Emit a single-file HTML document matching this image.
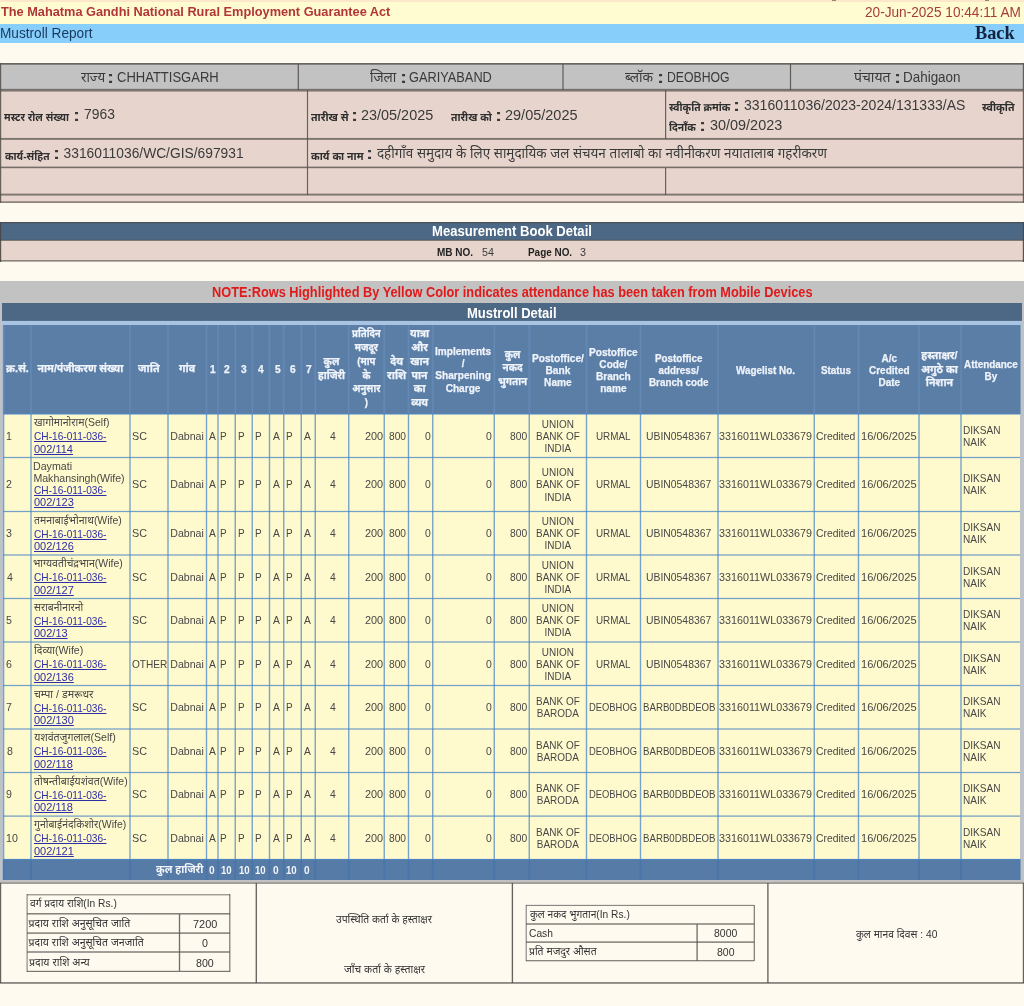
<!DOCTYPE html>
<html lang="hi"><head><meta charset="utf-8"><title>Mustroll Report</title>
<style>
html,body{margin:0;padding:0}
body{width:1024px;height:1006px;background:#fffaf0;position:relative;overflow:hidden;font-family:"Liberation Sans","Noto Sans Devanagari","FreeSans",sans-serif;color:#3a3a3a;font-size:11px;}
.r{position:absolute}
#tx{position:absolute;left:0;top:0;width:1024px;height:1006px;will-change:transform;filter:blur(0.3px)}
.t{position:absolute;white-space:nowrap;transform-origin:0 0;line-height:14px}
.c{text-align:center}.rt{text-align:right}
.b{font-weight:bold}
.hd{-webkit-text-stroke:0.25px #eff3fa;color:#eff3fa;font-size:10.5px;line-height:12.2px;font-weight:bold;text-align:center}
.hh{line-height:13.8px}
.bd{font-size:10.6px;line-height:12.1px;color:#474747}
a{color:#2e2ea6;text-decoration:underline}
.lb{font-size:10.8px;font-weight:bold;color:#2e2e2e}.co{font-size:17px;font-weight:bold;line-height:10px}
.s14{font-size:13.8px;line-height:18px}
.s105{font-size:10.5px}
</style></head>
<body>
<div class="r" style="left:0px;top:0px;width:1024px;height:2px;background:#fce8c8"></div>
<div class="r" style="left:832px;top:0px;width:4px;height:1.4px;background:rgba(70,55,40,0.55)"></div>
<div class="r" style="left:985px;top:0px;width:4px;height:1.4px;background:rgba(70,55,40,0.55)"></div>
<div class="r" style="left:0px;top:2px;width:1024px;height:21.6px;background:#fffcd2"></div>
<div class="r" style="left:0px;top:23.6px;width:1024px;height:19.1px;background:#87cefa"></div>
<div class="r" style="left:0px;top:63px;width:1024px;height:27px;background:#c2c2c2"></div>
<div class="r" style="left:0px;top:90px;width:1024px;height:112.5px;background:#e7d5cd"></div>
<div class="r" style="left:0px;top:63px;width:1024px;height:1px;background:rgba(90,84,80,0.85)"></div>
<div class="r" style="left:0px;top:64px;width:1024px;height:1px;background:rgba(90,84,80,0.59)"></div>
<div class="r" style="left:0px;top:88px;width:1024px;height:1px;background:rgba(90,84,80,0.11)"></div>
<div class="r" style="left:0px;top:89px;width:1024px;height:1px;background:rgba(90,84,80,0.75)"></div>
<div class="r" style="left:0px;top:90px;width:1024px;height:1px;background:rgba(90,84,80,0.75)"></div>
<div class="r" style="left:0px;top:91px;width:1024px;height:1px;background:rgba(90,84,80,0.41)"></div>
<div class="r" style="left:0px;top:137px;width:1024px;height:1px;background:rgba(90,84,80,0.04)"></div>
<div class="r" style="left:0px;top:138px;width:1024px;height:1px;background:rgba(90,84,80,0.75)"></div>
<div class="r" style="left:0px;top:139px;width:1024px;height:1px;background:rgba(90,84,80,0.64)"></div>
<div class="r" style="left:0px;top:166px;width:1024px;height:1px;background:rgba(90,84,80,0.32)"></div>
<div class="r" style="left:0px;top:167px;width:1024px;height:1px;background:rgba(90,84,80,0.80)"></div>
<div class="r" style="left:0px;top:168px;width:1024px;height:1px;background:rgba(90,84,80,0.16)"></div>
<div class="r" style="left:0px;top:193px;width:1024px;height:1px;background:rgba(90,84,80,0.26)"></div>
<div class="r" style="left:0px;top:194px;width:1024px;height:1px;background:rgba(90,84,80,0.75)"></div>
<div class="r" style="left:0px;top:195px;width:1024px;height:1px;background:rgba(90,84,80,0.41)"></div>
<div class="r" style="left:0px;top:201px;width:1024px;height:1px;background:rgba(90,84,80,0.47)"></div>
<div class="r" style="left:0px;top:202px;width:1024px;height:1px;background:rgba(90,84,80,0.64)"></div>
<div class="r" style="left:0px;top:63px;width:1px;height:140px;background:rgba(90,84,80,0.90)"></div>
<div class="r" style="left:1px;top:63px;width:1px;height:140px;background:rgba(90,84,80,0.18)"></div>
<div class="r" style="left:1022px;top:63px;width:1px;height:140px;background:rgba(90,84,80,0.18)"></div>
<div class="r" style="left:1023px;top:63px;width:1px;height:140px;background:rgba(90,84,80,0.90)"></div>
<div class="r" style="left:297px;top:64px;width:1px;height:26px;background:rgba(90,84,80,0.29)"></div>
<div class="r" style="left:298px;top:64px;width:1px;height:26px;background:rgba(90,84,80,0.86)"></div>
<div class="r" style="left:562px;top:64px;width:1px;height:26px;background:rgba(90,84,80,0.57)"></div>
<div class="r" style="left:563px;top:64px;width:1px;height:26px;background:rgba(90,84,80,0.57)"></div>
<div class="r" style="left:789px;top:64px;width:1px;height:26px;background:rgba(90,84,80,0.10)"></div>
<div class="r" style="left:790px;top:64px;width:1px;height:26px;background:rgba(90,84,80,0.95)"></div>
<div class="r" style="left:791px;top:64px;width:1px;height:26px;background:rgba(90,84,80,0.10)"></div>
<div class="r" style="left:306px;top:90px;width:1px;height:105px;background:rgba(90,84,80,0.09)"></div>
<div class="r" style="left:307px;top:90px;width:1px;height:105px;background:rgba(90,84,80,0.90)"></div>
<div class="r" style="left:308px;top:90px;width:1px;height:105px;background:rgba(90,84,80,0.09)"></div>
<div class="r" style="left:665px;top:90px;width:1px;height:49px;background:rgba(90,84,80,0.90)"></div>
<div class="r" style="left:666px;top:90px;width:1px;height:49px;background:rgba(90,84,80,0.18)"></div>
<div class="r" style="left:665px;top:168px;width:1px;height:27px;background:rgba(90,84,80,0.90)"></div>
<div class="r" style="left:666px;top:168px;width:1px;height:27px;background:rgba(90,84,80,0.18)"></div>
<div class="r" style="left:0px;top:222px;width:1024px;height:18px;background:#4d6885"></div>
<div class="r" style="left:0px;top:240px;width:1024px;height:21px;background:#e7d5cd"></div>
<div class="r" style="left:0px;top:222px;width:1024px;height:1px;background:rgba(74,70,68,0.72)"></div>
<div class="r" style="left:0px;top:223px;width:1024px;height:1px;background:rgba(74,70,68,0.18)"></div>
<div class="r" style="left:0px;top:239px;width:1024px;height:1px;background:rgba(74,70,68,0.16)"></div>
<div class="r" style="left:0px;top:240px;width:1024px;height:1px;background:rgba(74,70,68,0.64)"></div>
<div class="r" style="left:0px;top:260px;width:1024px;height:1px;background:rgba(90,84,80,0.63)"></div>
<div class="r" style="left:0px;top:261px;width:1024px;height:1px;background:rgba(90,84,80,0.45)"></div>
<div class="r" style="left:0px;top:222px;width:1px;height:40px;background:rgba(74,70,68,0.90)"></div>
<div class="r" style="left:1px;top:222px;width:1px;height:40px;background:rgba(74,70,68,0.18)"></div>
<div class="r" style="left:1022px;top:222px;width:1px;height:40px;background:rgba(74,70,68,0.18)"></div>
<div class="r" style="left:1023px;top:222px;width:1px;height:40px;background:rgba(74,70,68,0.90)"></div>
<div class="r" style="left:0px;top:281.2px;width:1024px;height:601.8px;background:#c2c2c2"></div>
<div class="r" style="left:2.3px;top:303.4px;width:1019.5px;height:18.1px;background:#4d6885"></div>
<div class="r" style="left:2px;top:320px;width:1020px;height:1px;background:rgba(168,196,226,0.10)"></div>
<div class="r" style="left:2px;top:321px;width:1020px;height:1px;background:rgba(168,196,226,1.00)"></div>
<div class="r" style="left:2px;top:322px;width:1020px;height:1px;background:rgba(168,196,226,1.00)"></div>
<div class="r" style="left:2px;top:323px;width:1020px;height:1px;background:rgba(168,196,226,1.00)"></div>
<div class="r" style="left:2px;top:324px;width:1020px;height:1px;background:rgba(168,196,226,1.00)"></div>
<div class="r" style="left:2px;top:325px;width:1020px;height:1px;background:rgba(168,196,226,0.10)"></div>
<div class="r" style="left:2.3px;top:324.8px;width:1018.3px;height:89.2px;background:#5b7ea7"></div>
<div class="r" style="left:2.3px;top:414px;width:1018.1px;height:445.6px;background:#fffacd"></div>
<div class="r" style="left:2.3px;top:859.4px;width:1018.3px;height:20.5px;background:#567ba6"></div>
<div class="r" style="left:1020px;top:325px;width:1px;height:555px;background:rgba(176,196,220,0.45)"></div>
<div class="r" style="left:1021px;top:325px;width:1px;height:555px;background:rgba(176,196,220,1.00)"></div>
<div class="r" style="left:1022px;top:325px;width:1px;height:555px;background:rgba(176,196,220,0.05)"></div>
<div class="r" style="left:1px;top:325px;width:1px;height:555px;background:rgba(176,196,220,0.09)"></div>
<div class="r" style="left:2px;top:325px;width:1px;height:555px;background:rgba(176,196,220,0.90)"></div>
<div class="r" style="left:3px;top:325px;width:1px;height:555px;background:rgba(176,196,220,0.09)"></div>
<div class="r" style="left:2px;top:325px;width:1px;height:89px;background:rgba(122,166,220,0.07)"></div>
<div class="r" style="left:3px;top:325px;width:1px;height:89px;background:rgba(122,166,220,0.25)"></div>
<div class="r" style="left:4px;top:325px;width:1px;height:89px;background:rgba(122,166,220,0.12)"></div>
<div class="r" style="left:30px;top:325px;width:1px;height:89px;background:rgba(122,166,220,0.22)"></div>
<div class="r" style="left:31px;top:325px;width:1px;height:89px;background:rgba(122,166,220,0.22)"></div>
<div class="r" style="left:129px;top:325px;width:1px;height:89px;background:rgba(122,166,220,0.23)"></div>
<div class="r" style="left:130px;top:325px;width:1px;height:89px;background:rgba(122,166,220,0.23)"></div>
<div class="r" style="left:167px;top:325px;width:1px;height:89px;background:rgba(122,166,220,0.23)"></div>
<div class="r" style="left:168px;top:325px;width:1px;height:89px;background:rgba(122,166,220,0.23)"></div>
<div class="r" style="left:205px;top:325px;width:1px;height:89px;background:rgba(122,166,220,0.10)"></div>
<div class="r" style="left:206px;top:325px;width:1px;height:89px;background:rgba(122,166,220,0.25)"></div>
<div class="r" style="left:207px;top:325px;width:1px;height:89px;background:rgba(122,166,220,0.10)"></div>
<div class="r" style="left:217px;top:325px;width:1px;height:89px;background:rgba(122,166,220,0.23)"></div>
<div class="r" style="left:218px;top:325px;width:1px;height:89px;background:rgba(122,166,220,0.23)"></div>
<div class="r" style="left:234px;top:325px;width:1px;height:89px;background:rgba(122,166,220,0.16)"></div>
<div class="r" style="left:235px;top:325px;width:1px;height:89px;background:rgba(122,166,220,0.25)"></div>
<div class="r" style="left:236px;top:325px;width:1px;height:89px;background:rgba(122,166,220,0.04)"></div>
<div class="r" style="left:251px;top:325px;width:1px;height:89px;background:rgba(122,166,220,0.16)"></div>
<div class="r" style="left:252px;top:325px;width:1px;height:89px;background:rgba(122,166,220,0.25)"></div>
<div class="r" style="left:253px;top:325px;width:1px;height:89px;background:rgba(122,166,220,0.04)"></div>
<div class="r" style="left:268px;top:325px;width:1px;height:89px;background:rgba(122,166,220,0.10)"></div>
<div class="r" style="left:269px;top:325px;width:1px;height:89px;background:rgba(122,166,220,0.25)"></div>
<div class="r" style="left:270px;top:325px;width:1px;height:89px;background:rgba(122,166,220,0.10)"></div>
<div class="r" style="left:282px;top:325px;width:1px;height:89px;background:rgba(122,166,220,0.04)"></div>
<div class="r" style="left:283px;top:325px;width:1px;height:89px;background:rgba(122,166,220,0.25)"></div>
<div class="r" style="left:284px;top:325px;width:1px;height:89px;background:rgba(122,166,220,0.16)"></div>
<div class="r" style="left:300px;top:325px;width:1px;height:89px;background:rgba(122,166,220,0.16)"></div>
<div class="r" style="left:301px;top:325px;width:1px;height:89px;background:rgba(122,166,220,0.25)"></div>
<div class="r" style="left:302px;top:325px;width:1px;height:89px;background:rgba(122,166,220,0.04)"></div>
<div class="r" style="left:314px;top:325px;width:1px;height:89px;background:rgba(122,166,220,0.16)"></div>
<div class="r" style="left:315px;top:325px;width:1px;height:89px;background:rgba(122,166,220,0.25)"></div>
<div class="r" style="left:316px;top:325px;width:1px;height:89px;background:rgba(122,166,220,0.04)"></div>
<div class="r" style="left:347px;top:325px;width:1px;height:89px;background:rgba(122,166,220,0.04)"></div>
<div class="r" style="left:348px;top:325px;width:1px;height:89px;background:rgba(122,166,220,0.25)"></div>
<div class="r" style="left:349px;top:325px;width:1px;height:89px;background:rgba(122,166,220,0.16)"></div>
<div class="r" style="left:383px;top:325px;width:1px;height:89px;background:rgba(122,166,220,0.16)"></div>
<div class="r" style="left:384px;top:325px;width:1px;height:89px;background:rgba(122,166,220,0.25)"></div>
<div class="r" style="left:385px;top:325px;width:1px;height:89px;background:rgba(122,166,220,0.04)"></div>
<div class="r" style="left:407px;top:325px;width:1px;height:89px;background:rgba(122,166,220,0.10)"></div>
<div class="r" style="left:408px;top:325px;width:1px;height:89px;background:rgba(122,166,220,0.25)"></div>
<div class="r" style="left:409px;top:325px;width:1px;height:89px;background:rgba(122,166,220,0.10)"></div>
<div class="r" style="left:431px;top:325px;width:1px;height:89px;background:rgba(122,166,220,0.04)"></div>
<div class="r" style="left:432px;top:325px;width:1px;height:89px;background:rgba(122,166,220,0.25)"></div>
<div class="r" style="left:433px;top:325px;width:1px;height:89px;background:rgba(122,166,220,0.16)"></div>
<div class="r" style="left:493px;top:325px;width:1px;height:89px;background:rgba(122,166,220,0.16)"></div>
<div class="r" style="left:494px;top:325px;width:1px;height:89px;background:rgba(122,166,220,0.25)"></div>
<div class="r" style="left:495px;top:325px;width:1px;height:89px;background:rgba(122,166,220,0.04)"></div>
<div class="r" style="left:528px;top:325px;width:1px;height:89px;background:rgba(122,166,220,0.16)"></div>
<div class="r" style="left:529px;top:325px;width:1px;height:89px;background:rgba(122,166,220,0.25)"></div>
<div class="r" style="left:530px;top:325px;width:1px;height:89px;background:rgba(122,166,220,0.04)"></div>
<div class="r" style="left:585px;top:325px;width:1px;height:89px;background:rgba(122,166,220,0.10)"></div>
<div class="r" style="left:586px;top:325px;width:1px;height:89px;background:rgba(122,166,220,0.25)"></div>
<div class="r" style="left:587px;top:325px;width:1px;height:89px;background:rgba(122,166,220,0.10)"></div>
<div class="r" style="left:639px;top:325px;width:1px;height:89px;background:rgba(122,166,220,0.10)"></div>
<div class="r" style="left:640px;top:325px;width:1px;height:89px;background:rgba(122,166,220,0.25)"></div>
<div class="r" style="left:641px;top:325px;width:1px;height:89px;background:rgba(122,166,220,0.10)"></div>
<div class="r" style="left:717px;top:325px;width:1px;height:89px;background:rgba(122,166,220,0.22)"></div>
<div class="r" style="left:718px;top:325px;width:1px;height:89px;background:rgba(122,166,220,0.22)"></div>
<div class="r" style="left:813px;top:325px;width:1px;height:89px;background:rgba(122,166,220,0.16)"></div>
<div class="r" style="left:814px;top:325px;width:1px;height:89px;background:rgba(122,166,220,0.25)"></div>
<div class="r" style="left:815px;top:325px;width:1px;height:89px;background:rgba(122,166,220,0.04)"></div>
<div class="r" style="left:857px;top:325px;width:1px;height:89px;background:rgba(122,166,220,0.10)"></div>
<div class="r" style="left:858px;top:325px;width:1px;height:89px;background:rgba(122,166,220,0.25)"></div>
<div class="r" style="left:859px;top:325px;width:1px;height:89px;background:rgba(122,166,220,0.10)"></div>
<div class="r" style="left:918px;top:325px;width:1px;height:89px;background:rgba(122,166,220,0.22)"></div>
<div class="r" style="left:919px;top:325px;width:1px;height:89px;background:rgba(122,166,220,0.22)"></div>
<div class="r" style="left:960px;top:325px;width:1px;height:89px;background:rgba(122,166,220,0.22)"></div>
<div class="r" style="left:961px;top:325px;width:1px;height:89px;background:rgba(122,166,220,0.22)"></div>
<div class="r" style="left:2px;top:414px;width:1px;height:446px;background:rgba(74,134,198,0.07)"></div>
<div class="r" style="left:3px;top:414px;width:1px;height:446px;background:rgba(74,134,198,0.75)"></div>
<div class="r" style="left:4px;top:414px;width:1px;height:446px;background:rgba(74,134,198,0.22)"></div>
<div class="r" style="left:30px;top:414px;width:1px;height:446px;background:rgba(74,134,198,0.52)"></div>
<div class="r" style="left:31px;top:414px;width:1px;height:446px;background:rgba(74,134,198,0.52)"></div>
<div class="r" style="left:129px;top:414px;width:1px;height:446px;background:rgba(74,134,198,0.52)"></div>
<div class="r" style="left:130px;top:414px;width:1px;height:446px;background:rgba(74,134,198,0.52)"></div>
<div class="r" style="left:167px;top:414px;width:1px;height:446px;background:rgba(74,134,198,0.52)"></div>
<div class="r" style="left:168px;top:414px;width:1px;height:446px;background:rgba(74,134,198,0.52)"></div>
<div class="r" style="left:205px;top:414px;width:1px;height:446px;background:rgba(74,134,198,0.15)"></div>
<div class="r" style="left:206px;top:414px;width:1px;height:446px;background:rgba(74,134,198,0.75)"></div>
<div class="r" style="left:207px;top:414px;width:1px;height:446px;background:rgba(74,134,198,0.15)"></div>
<div class="r" style="left:217px;top:414px;width:1px;height:446px;background:rgba(74,134,198,0.52)"></div>
<div class="r" style="left:218px;top:414px;width:1px;height:446px;background:rgba(74,134,198,0.52)"></div>
<div class="r" style="left:234px;top:414px;width:1px;height:446px;background:rgba(74,134,198,0.34)"></div>
<div class="r" style="left:235px;top:414px;width:1px;height:446px;background:rgba(74,134,198,0.71)"></div>
<div class="r" style="left:251px;top:414px;width:1px;height:446px;background:rgba(74,134,198,0.34)"></div>
<div class="r" style="left:252px;top:414px;width:1px;height:446px;background:rgba(74,134,198,0.71)"></div>
<div class="r" style="left:268px;top:414px;width:1px;height:446px;background:rgba(74,134,198,0.15)"></div>
<div class="r" style="left:269px;top:414px;width:1px;height:446px;background:rgba(74,134,198,0.75)"></div>
<div class="r" style="left:270px;top:414px;width:1px;height:446px;background:rgba(74,134,198,0.15)"></div>
<div class="r" style="left:283px;top:414px;width:1px;height:446px;background:rgba(74,134,198,0.71)"></div>
<div class="r" style="left:284px;top:414px;width:1px;height:446px;background:rgba(74,134,198,0.34)"></div>
<div class="r" style="left:300px;top:414px;width:1px;height:446px;background:rgba(74,134,198,0.34)"></div>
<div class="r" style="left:301px;top:414px;width:1px;height:446px;background:rgba(74,134,198,0.71)"></div>
<div class="r" style="left:314px;top:414px;width:1px;height:446px;background:rgba(74,134,198,0.34)"></div>
<div class="r" style="left:315px;top:414px;width:1px;height:446px;background:rgba(74,134,198,0.71)"></div>
<div class="r" style="left:348px;top:414px;width:1px;height:446px;background:rgba(74,134,198,0.71)"></div>
<div class="r" style="left:349px;top:414px;width:1px;height:446px;background:rgba(74,134,198,0.34)"></div>
<div class="r" style="left:383px;top:414px;width:1px;height:446px;background:rgba(74,134,198,0.34)"></div>
<div class="r" style="left:384px;top:414px;width:1px;height:446px;background:rgba(74,134,198,0.71)"></div>
<div class="r" style="left:407px;top:414px;width:1px;height:446px;background:rgba(74,134,198,0.15)"></div>
<div class="r" style="left:408px;top:414px;width:1px;height:446px;background:rgba(74,134,198,0.75)"></div>
<div class="r" style="left:409px;top:414px;width:1px;height:446px;background:rgba(74,134,198,0.15)"></div>
<div class="r" style="left:432px;top:414px;width:1px;height:446px;background:rgba(74,134,198,0.71)"></div>
<div class="r" style="left:433px;top:414px;width:1px;height:446px;background:rgba(74,134,198,0.34)"></div>
<div class="r" style="left:493px;top:414px;width:1px;height:446px;background:rgba(74,134,198,0.34)"></div>
<div class="r" style="left:494px;top:414px;width:1px;height:446px;background:rgba(74,134,198,0.71)"></div>
<div class="r" style="left:528px;top:414px;width:1px;height:446px;background:rgba(74,134,198,0.34)"></div>
<div class="r" style="left:529px;top:414px;width:1px;height:446px;background:rgba(74,134,198,0.71)"></div>
<div class="r" style="left:585px;top:414px;width:1px;height:446px;background:rgba(74,134,198,0.15)"></div>
<div class="r" style="left:586px;top:414px;width:1px;height:446px;background:rgba(74,134,198,0.75)"></div>
<div class="r" style="left:587px;top:414px;width:1px;height:446px;background:rgba(74,134,198,0.15)"></div>
<div class="r" style="left:639px;top:414px;width:1px;height:446px;background:rgba(74,134,198,0.15)"></div>
<div class="r" style="left:640px;top:414px;width:1px;height:446px;background:rgba(74,134,198,0.75)"></div>
<div class="r" style="left:641px;top:414px;width:1px;height:446px;background:rgba(74,134,198,0.15)"></div>
<div class="r" style="left:717px;top:414px;width:1px;height:446px;background:rgba(74,134,198,0.53)"></div>
<div class="r" style="left:718px;top:414px;width:1px;height:446px;background:rgba(74,134,198,0.53)"></div>
<div class="r" style="left:813px;top:414px;width:1px;height:446px;background:rgba(74,134,198,0.34)"></div>
<div class="r" style="left:814px;top:414px;width:1px;height:446px;background:rgba(74,134,198,0.71)"></div>
<div class="r" style="left:857px;top:414px;width:1px;height:446px;background:rgba(74,134,198,0.15)"></div>
<div class="r" style="left:858px;top:414px;width:1px;height:446px;background:rgba(74,134,198,0.75)"></div>
<div class="r" style="left:859px;top:414px;width:1px;height:446px;background:rgba(74,134,198,0.15)"></div>
<div class="r" style="left:918px;top:414px;width:1px;height:446px;background:rgba(74,134,198,0.53)"></div>
<div class="r" style="left:919px;top:414px;width:1px;height:446px;background:rgba(74,134,198,0.53)"></div>
<div class="r" style="left:960px;top:414px;width:1px;height:446px;background:rgba(74,134,198,0.53)"></div>
<div class="r" style="left:961px;top:414px;width:1px;height:446px;background:rgba(74,134,198,0.53)"></div>
<div class="r" style="left:3px;top:413px;width:1017px;height:1px;background:rgba(74,134,198,0.49)"></div>
<div class="r" style="left:3px;top:414px;width:1017px;height:1px;background:rgba(74,134,198,0.49)"></div>
<div class="r" style="left:3px;top:456px;width:1017px;height:1px;background:rgba(74,134,198,0.10)"></div>
<div class="r" style="left:3px;top:457px;width:1017px;height:1px;background:rgba(74,134,198,0.78)"></div>
<div class="r" style="left:3px;top:458px;width:1017px;height:1px;background:rgba(74,134,198,0.10)"></div>
<div class="r" style="left:3px;top:510px;width:1017px;height:1px;background:rgba(74,134,198,0.10)"></div>
<div class="r" style="left:3px;top:511px;width:1017px;height:1px;background:rgba(74,134,198,0.78)"></div>
<div class="r" style="left:3px;top:512px;width:1017px;height:1px;background:rgba(74,134,198,0.10)"></div>
<div class="r" style="left:3px;top:554px;width:1017px;height:1px;background:rgba(74,134,198,0.49)"></div>
<div class="r" style="left:3px;top:555px;width:1017px;height:1px;background:rgba(74,134,198,0.49)"></div>
<div class="r" style="left:3px;top:597px;width:1017px;height:1px;background:rgba(74,134,198,0.10)"></div>
<div class="r" style="left:3px;top:598px;width:1017px;height:1px;background:rgba(74,134,198,0.78)"></div>
<div class="r" style="left:3px;top:599px;width:1017px;height:1px;background:rgba(74,134,198,0.10)"></div>
<div class="r" style="left:3px;top:641px;width:1017px;height:1px;background:rgba(74,134,198,0.49)"></div>
<div class="r" style="left:3px;top:642px;width:1017px;height:1px;background:rgba(74,134,198,0.49)"></div>
<div class="r" style="left:3px;top:684px;width:1017px;height:1px;background:rgba(74,134,198,0.10)"></div>
<div class="r" style="left:3px;top:685px;width:1017px;height:1px;background:rgba(74,134,198,0.78)"></div>
<div class="r" style="left:3px;top:686px;width:1017px;height:1px;background:rgba(74,134,198,0.10)"></div>
<div class="r" style="left:3px;top:728px;width:1017px;height:1px;background:rgba(74,134,198,0.49)"></div>
<div class="r" style="left:3px;top:729px;width:1017px;height:1px;background:rgba(74,134,198,0.49)"></div>
<div class="r" style="left:3px;top:771px;width:1017px;height:1px;background:rgba(74,134,198,0.10)"></div>
<div class="r" style="left:3px;top:772px;width:1017px;height:1px;background:rgba(74,134,198,0.78)"></div>
<div class="r" style="left:3px;top:773px;width:1017px;height:1px;background:rgba(74,134,198,0.10)"></div>
<div class="r" style="left:3px;top:815px;width:1017px;height:1px;background:rgba(74,134,198,0.41)"></div>
<div class="r" style="left:3px;top:816px;width:1017px;height:1px;background:rgba(74,134,198,0.57)"></div>
<div class="r" style="left:3px;top:858px;width:1017px;height:1px;background:rgba(74,134,198,0.10)"></div>
<div class="r" style="left:3px;top:859px;width:1017px;height:1px;background:rgba(74,134,198,0.78)"></div>
<div class="r" style="left:3px;top:860px;width:1017px;height:1px;background:rgba(74,134,198,0.10)"></div>
<div class="r" style="left:2px;top:860px;width:1px;height:20px;background:rgba(60,110,170,0.13)"></div>
<div class="r" style="left:3px;top:860px;width:1px;height:20px;background:rgba(60,110,170,0.45)"></div>
<div class="r" style="left:4px;top:860px;width:1px;height:20px;background:rgba(60,110,170,0.23)"></div>
<div class="r" style="left:30px;top:860px;width:1px;height:20px;background:rgba(60,110,170,0.40)"></div>
<div class="r" style="left:31px;top:860px;width:1px;height:20px;background:rgba(60,110,170,0.40)"></div>
<div class="r" style="left:129px;top:860px;width:1px;height:20px;background:rgba(60,110,170,0.41)"></div>
<div class="r" style="left:130px;top:860px;width:1px;height:20px;background:rgba(60,110,170,0.41)"></div>
<div class="r" style="left:167px;top:860px;width:1px;height:20px;background:rgba(60,110,170,0.41)"></div>
<div class="r" style="left:168px;top:860px;width:1px;height:20px;background:rgba(60,110,170,0.41)"></div>
<div class="r" style="left:205px;top:860px;width:1px;height:20px;background:rgba(60,110,170,0.18)"></div>
<div class="r" style="left:206px;top:860px;width:1px;height:20px;background:rgba(60,110,170,0.45)"></div>
<div class="r" style="left:207px;top:860px;width:1px;height:20px;background:rgba(60,110,170,0.18)"></div>
<div class="r" style="left:217px;top:860px;width:1px;height:20px;background:rgba(60,110,170,0.41)"></div>
<div class="r" style="left:218px;top:860px;width:1px;height:20px;background:rgba(60,110,170,0.41)"></div>
<div class="r" style="left:234px;top:860px;width:1px;height:20px;background:rgba(60,110,170,0.29)"></div>
<div class="r" style="left:235px;top:860px;width:1px;height:20px;background:rgba(60,110,170,0.45)"></div>
<div class="r" style="left:236px;top:860px;width:1px;height:20px;background:rgba(60,110,170,0.07)"></div>
<div class="r" style="left:251px;top:860px;width:1px;height:20px;background:rgba(60,110,170,0.29)"></div>
<div class="r" style="left:252px;top:860px;width:1px;height:20px;background:rgba(60,110,170,0.45)"></div>
<div class="r" style="left:253px;top:860px;width:1px;height:20px;background:rgba(60,110,170,0.07)"></div>
<div class="r" style="left:268px;top:860px;width:1px;height:20px;background:rgba(60,110,170,0.18)"></div>
<div class="r" style="left:269px;top:860px;width:1px;height:20px;background:rgba(60,110,170,0.45)"></div>
<div class="r" style="left:270px;top:860px;width:1px;height:20px;background:rgba(60,110,170,0.18)"></div>
<div class="r" style="left:282px;top:860px;width:1px;height:20px;background:rgba(60,110,170,0.07)"></div>
<div class="r" style="left:283px;top:860px;width:1px;height:20px;background:rgba(60,110,170,0.45)"></div>
<div class="r" style="left:284px;top:860px;width:1px;height:20px;background:rgba(60,110,170,0.29)"></div>
<div class="r" style="left:300px;top:860px;width:1px;height:20px;background:rgba(60,110,170,0.29)"></div>
<div class="r" style="left:301px;top:860px;width:1px;height:20px;background:rgba(60,110,170,0.45)"></div>
<div class="r" style="left:302px;top:860px;width:1px;height:20px;background:rgba(60,110,170,0.07)"></div>
<div class="r" style="left:314px;top:860px;width:1px;height:20px;background:rgba(60,110,170,0.29)"></div>
<div class="r" style="left:315px;top:860px;width:1px;height:20px;background:rgba(60,110,170,0.45)"></div>
<div class="r" style="left:316px;top:860px;width:1px;height:20px;background:rgba(60,110,170,0.07)"></div>
<div class="r" style="left:347px;top:860px;width:1px;height:20px;background:rgba(60,110,170,0.07)"></div>
<div class="r" style="left:348px;top:860px;width:1px;height:20px;background:rgba(60,110,170,0.45)"></div>
<div class="r" style="left:349px;top:860px;width:1px;height:20px;background:rgba(60,110,170,0.29)"></div>
<div class="r" style="left:383px;top:860px;width:1px;height:20px;background:rgba(60,110,170,0.29)"></div>
<div class="r" style="left:384px;top:860px;width:1px;height:20px;background:rgba(60,110,170,0.45)"></div>
<div class="r" style="left:385px;top:860px;width:1px;height:20px;background:rgba(60,110,170,0.07)"></div>
<div class="r" style="left:407px;top:860px;width:1px;height:20px;background:rgba(60,110,170,0.18)"></div>
<div class="r" style="left:408px;top:860px;width:1px;height:20px;background:rgba(60,110,170,0.45)"></div>
<div class="r" style="left:409px;top:860px;width:1px;height:20px;background:rgba(60,110,170,0.18)"></div>
<div class="r" style="left:431px;top:860px;width:1px;height:20px;background:rgba(60,110,170,0.07)"></div>
<div class="r" style="left:432px;top:860px;width:1px;height:20px;background:rgba(60,110,170,0.45)"></div>
<div class="r" style="left:433px;top:860px;width:1px;height:20px;background:rgba(60,110,170,0.29)"></div>
<div class="r" style="left:493px;top:860px;width:1px;height:20px;background:rgba(60,110,170,0.29)"></div>
<div class="r" style="left:494px;top:860px;width:1px;height:20px;background:rgba(60,110,170,0.45)"></div>
<div class="r" style="left:495px;top:860px;width:1px;height:20px;background:rgba(60,110,170,0.07)"></div>
<div class="r" style="left:528px;top:860px;width:1px;height:20px;background:rgba(60,110,170,0.29)"></div>
<div class="r" style="left:529px;top:860px;width:1px;height:20px;background:rgba(60,110,170,0.45)"></div>
<div class="r" style="left:530px;top:860px;width:1px;height:20px;background:rgba(60,110,170,0.07)"></div>
<div class="r" style="left:585px;top:860px;width:1px;height:20px;background:rgba(60,110,170,0.18)"></div>
<div class="r" style="left:586px;top:860px;width:1px;height:20px;background:rgba(60,110,170,0.45)"></div>
<div class="r" style="left:587px;top:860px;width:1px;height:20px;background:rgba(60,110,170,0.18)"></div>
<div class="r" style="left:639px;top:860px;width:1px;height:20px;background:rgba(60,110,170,0.18)"></div>
<div class="r" style="left:640px;top:860px;width:1px;height:20px;background:rgba(60,110,170,0.45)"></div>
<div class="r" style="left:641px;top:860px;width:1px;height:20px;background:rgba(60,110,170,0.18)"></div>
<div class="r" style="left:717px;top:860px;width:1px;height:20px;background:rgba(60,110,170,0.40)"></div>
<div class="r" style="left:718px;top:860px;width:1px;height:20px;background:rgba(60,110,170,0.40)"></div>
<div class="r" style="left:813px;top:860px;width:1px;height:20px;background:rgba(60,110,170,0.29)"></div>
<div class="r" style="left:814px;top:860px;width:1px;height:20px;background:rgba(60,110,170,0.45)"></div>
<div class="r" style="left:815px;top:860px;width:1px;height:20px;background:rgba(60,110,170,0.07)"></div>
<div class="r" style="left:857px;top:860px;width:1px;height:20px;background:rgba(60,110,170,0.18)"></div>
<div class="r" style="left:858px;top:860px;width:1px;height:20px;background:rgba(60,110,170,0.45)"></div>
<div class="r" style="left:859px;top:860px;width:1px;height:20px;background:rgba(60,110,170,0.18)"></div>
<div class="r" style="left:918px;top:860px;width:1px;height:20px;background:rgba(60,110,170,0.40)"></div>
<div class="r" style="left:919px;top:860px;width:1px;height:20px;background:rgba(60,110,170,0.40)"></div>
<div class="r" style="left:960px;top:860px;width:1px;height:20px;background:rgba(60,110,170,0.40)"></div>
<div class="r" style="left:961px;top:860px;width:1px;height:20px;background:rgba(60,110,170,0.40)"></div>
<div class="r" style="left:0px;top:883px;width:1024px;height:101px;background:#fffaf0"></div>
<div class="r" style="left:0px;top:882px;width:1024px;height:1px;background:rgba(85,81,78,0.29)"></div>
<div class="r" style="left:0px;top:883px;width:1024px;height:1px;background:rgba(85,81,78,0.55)"></div>
<div class="r" style="left:0px;top:982px;width:1024px;height:1px;background:rgba(85,81,78,0.68)"></div>
<div class="r" style="left:0px;top:983px;width:1024px;height:1px;background:rgba(85,81,78,0.59)"></div>
<div class="r" style="left:0px;top:883px;width:1px;height:100px;background:rgba(85,81,78,0.90)"></div>
<div class="r" style="left:1px;top:883px;width:1px;height:100px;background:rgba(85,81,78,0.18)"></div>
<div class="r" style="left:1022px;top:883px;width:1px;height:100px;background:rgba(85,81,78,0.18)"></div>
<div class="r" style="left:1023px;top:883px;width:1px;height:100px;background:rgba(85,81,78,0.90)"></div>
<div class="r" style="left:255px;top:883px;width:1px;height:100px;background:rgba(85,81,78,0.34)"></div>
<div class="r" style="left:256px;top:883px;width:1px;height:100px;background:rgba(85,81,78,0.88)"></div>
<div class="r" style="left:511px;top:883px;width:1px;height:100px;background:rgba(85,81,78,0.25)"></div>
<div class="r" style="left:512px;top:883px;width:1px;height:100px;background:rgba(85,81,78,0.90)"></div>
<div class="r" style="left:513px;top:883px;width:1px;height:100px;background:rgba(85,81,78,0.07)"></div>
<div class="r" style="left:767px;top:883px;width:1px;height:100px;background:rgba(85,81,78,0.70)"></div>
<div class="r" style="left:768px;top:883px;width:1px;height:100px;background:rgba(85,81,78,0.52)"></div>
<div class="r" style="left:27px;top:894px;width:203px;height:1px;background:rgba(90,86,82,0.56)"></div>
<div class="r" style="left:27px;top:895px;width:203px;height:1px;background:rgba(90,86,82,0.26)"></div>
<div class="r" style="left:27px;top:970px;width:203px;height:1px;background:rgba(90,86,82,0.16)"></div>
<div class="r" style="left:27px;top:971px;width:203px;height:1px;background:rgba(90,86,82,0.80)"></div>
<div class="r" style="left:27px;top:913px;width:203px;height:1px;background:rgba(90,86,82,0.74)"></div>
<div class="r" style="left:27px;top:914px;width:203px;height:1px;background:rgba(90,86,82,0.40)"></div>
<div class="r" style="left:27px;top:932px;width:203px;height:1px;background:rgba(90,86,82,0.49)"></div>
<div class="r" style="left:27px;top:933px;width:203px;height:1px;background:rgba(90,86,82,0.66)"></div>
<div class="r" style="left:27px;top:951px;width:203px;height:1px;background:rgba(90,86,82,0.57)"></div>
<div class="r" style="left:27px;top:952px;width:203px;height:1px;background:rgba(90,86,82,0.57)"></div>
<div class="r" style="left:26px;top:894px;width:1px;height:78px;background:rgba(90,86,82,0.34)"></div>
<div class="r" style="left:27px;top:894px;width:1px;height:78px;background:rgba(90,86,82,0.49)"></div>
<div class="r" style="left:229px;top:894px;width:1px;height:78px;background:rgba(90,86,82,0.64)"></div>
<div class="r" style="left:230px;top:894px;width:1px;height:78px;background:rgba(90,86,82,0.32)"></div>
<div class="r" style="left:178px;top:914px;width:1px;height:57px;background:rgba(90,86,82,0.15)"></div>
<div class="r" style="left:179px;top:914px;width:1px;height:57px;background:rgba(90,86,82,0.85)"></div>
<div class="r" style="left:180px;top:914px;width:1px;height:57px;background:rgba(90,86,82,0.15)"></div>
<div class="r" style="left:526px;top:904px;width:228px;height:1px;background:rgba(90,86,82,0.11)"></div>
<div class="r" style="left:526px;top:905px;width:228px;height:1px;background:rgba(90,86,82,0.71)"></div>
<div class="r" style="left:526px;top:960px;width:228px;height:1px;background:rgba(90,86,82,0.72)"></div>
<div class="r" style="left:526px;top:961px;width:228px;height:1px;background:rgba(90,86,82,0.24)"></div>
<div class="r" style="left:526px;top:923px;width:228px;height:1px;background:rgba(90,86,82,0.57)"></div>
<div class="r" style="left:526px;top:924px;width:228px;height:1px;background:rgba(90,86,82,0.57)"></div>
<div class="r" style="left:526px;top:941px;width:228px;height:1px;background:rgba(90,86,82,0.49)"></div>
<div class="r" style="left:526px;top:942px;width:228px;height:1px;background:rgba(90,86,82,0.66)"></div>
<div class="r" style="left:525px;top:905px;width:1px;height:56px;background:rgba(90,86,82,0.26)"></div>
<div class="r" style="left:526px;top:905px;width:1px;height:56px;background:rgba(90,86,82,0.56)"></div>
<div class="r" style="left:753px;top:905px;width:1px;height:56px;background:rgba(90,86,82,0.24)"></div>
<div class="r" style="left:754px;top:905px;width:1px;height:56px;background:rgba(90,86,82,0.72)"></div>
<div class="r" style="left:696px;top:924px;width:1px;height:37px;background:rgba(90,86,82,0.49)"></div>
<div class="r" style="left:697px;top:924px;width:1px;height:37px;background:rgba(90,86,82,0.66)"></div>
<div id="tx">
<div class="t b" style="left:1.20px;top:3.90px;transform:scaleX(0.9449);line-height:16px;color:#b23636;font-size:13.5px;">The Mahatma Gandhi National Rural Employment Guarantee Act</div>
<div class="t " style="left:864.83px;top:4.40px;transform:scaleX(0.9734);line-height:16px;color:#a63c3c;font-size:14px;">20-Jun-2025 10:44:11 AM</div>
<div class="t " style="left:0.23px;top:24.80px;transform:scaleX(0.9745);line-height:16px;color:#173a5e;font-size:14px;">Mustroll Report</div>
<div class="t b" style="left:975.30px;top:23.00px;transform:scaleX(0.9900);line-height:20px;color:#14233f;font-size:18.5px;font-family:'Liberation Serif',serif;">Back</div>
<div class="t s14" style="left:80.50px;top:69.00px;transform:scaleX(0.9600);line-height:18px;">राज्य</div>
<div class="t co" style="left:106.90px;top:72.50px;transform:scaleX(1.2500);">:</div>
<div class="t s14" style="left:117.06px;top:68.50px;transform:scaleX(0.9434);line-height:18px;">CHHATTISGARH</div>
<div class="t s14" style="left:370.30px;top:69.00px;transform:scaleX(0.9852);line-height:18px;">जिला</div>
<div class="t co" style="left:399.90px;top:72.50px;transform:scaleX(1.2500);">:</div>
<div class="t s14" style="left:409.07px;top:68.50px;transform:scaleX(0.9261);line-height:18px;">GARIYABAND</div>
<div class="t s14" style="left:625.00px;top:69.00px;transform:scaleX(0.9897);line-height:18px;">ब्लॉक</div>
<div class="t co" style="left:656.50px;top:72.50px;transform:scaleX(1.2500);">:</div>
<div class="t s14" style="left:666.71px;top:68.50px;transform:scaleX(0.8884);line-height:18px;">DEOBHOG</div>
<div class="t s14" style="left:854.00px;top:69.00px;transform:scaleX(1.0139);line-height:18px;">पंचायत</div>
<div class="t co" style="left:893.90px;top:72.50px;transform:scaleX(1.2500);">:</div>
<div class="t s14" style="left:903.33px;top:68.50px;transform:scaleX(0.9737);line-height:18px;">Dahigaon</div>
<div class="t lb" style="left:4.30px;top:109.80px;transform:scaleX(0.9464);line-height:14px;">मस्टर रोल संख्या</div>
<div class="t co" style="left:73.30px;top:110.70px;transform:scaleX(1.2500);">:</div>
<div class="t s14" style="left:83.79px;top:106.30px;transform:scaleX(1.0069);line-height:18px;">7963</div>
<div class="t lb" style="left:310.50px;top:110.10px;transform:scaleX(0.9868);line-height:14px;">तारीख से</div>
<div class="t co" style="left:351.40px;top:111.00px;transform:scaleX(1.2500);">:</div>
<div class="t s14" style="left:361.25px;top:106.60px;transform:scaleX(1.0456);line-height:18px;">23/05/2025</div>
<div class="t lb" style="left:451.00px;top:110.10px;transform:scaleX(0.9651);line-height:14px;">तारीख को</div>
<div class="t co" style="left:495.20px;top:111.00px;transform:scaleX(1.2500);">:</div>
<div class="t s14" style="left:505.35px;top:106.60px;transform:scaleX(1.0500);line-height:18px;">29/05/2025</div>
<div class="t lb" style="left:668.90px;top:100.10px;transform:scaleX(0.9547);line-height:14px;">स्वीकृति क्रमांक</div>
<div class="t co" style="left:733.30px;top:101.00px;transform:scaleX(1.2500);">:</div>
<div class="t s14" style="left:744.48px;top:96.60px;transform:scaleX(1.0171);line-height:18px;">3316011036/2023-2024/131333/AS</div>
<div class="t lb" style="left:981.80px;top:100.10px;transform:scaleX(0.9848);line-height:14px;">स्वीकृति</div>
<div class="t lb" style="left:668.90px;top:120.00px;transform:scaleX(0.9571);line-height:14px;">दिनाँक</div>
<div class="t co" style="left:698.90px;top:120.90px;transform:scaleX(1.2500);">:</div>
<div class="t s14" style="left:709.55px;top:116.50px;transform:scaleX(1.0456);line-height:18px;">30/09/2023</div>
<div class="t lb" style="left:4.80px;top:148.50px;transform:scaleX(0.9574);line-height:14px;">कार्य-संहित</div>
<div class="t co" style="left:53.00px;top:149.40px;transform:scaleX(1.2500);">:</div>
<div class="t s14" style="left:63.60px;top:145.00px;line-height:18px;">3316011036/WC/GIS/697931</div>
<div class="t lb" style="left:310.50px;top:148.50px;transform:scaleX(0.9722);line-height:14px;">कार्य का नाम</div>
<div class="t co" style="left:365.90px;top:149.40px;transform:scaleX(1.2500);">:</div>
<div class="t s14" style="left:377.00px;top:144.60px;transform:scaleX(0.9719);line-height:18px;">दहीगाँव समुदाय के लिए सामुदायिक जल संचयन तालाबो का नवीनीकरण नयातालाब गहरीकरण</div>
<div class="t b" style="left:432.37px;top:223.00px;transform:scaleX(0.9343);line-height:16px;color:#fff;font-size:14px;">Measurement Book Detail</div>
<div class="t b" style="left:437.09px;top:245.00px;transform:scaleX(0.9079);line-height:14px;font-size:11px;color:#222;">MB NO.</div>
<div class="t " style="left:481.53px;top:245.00px;transform:scaleX(0.9727);line-height:14px;font-size:11px;">54</div>
<div class="t b" style="left:527.90px;top:245.00px;transform:scaleX(0.9021);line-height:14px;font-size:11px;color:#222;">Page NO.</div>
<div class="t " style="left:579.82px;top:245.00px;transform:scaleX(0.9800);line-height:14px;font-size:11px;">3</div>
<div class="t b" style="left:211.59px;top:283.80px;transform:scaleX(0.9117);line-height:16px;color:#e01a1a;font-size:14px;">NOTE:Rows Highlighted By Yellow Color indicates attendance has been taken from Mobile Devices</div>
<div class="t b" style="left:467.07px;top:304.70px;transform:scaleX(0.9284);line-height:16px;color:#fff;font-size:14px;">Mustroll Detail</div>
<div class="t hd hh" style="left:5.50px;top:361.90px;transform:scaleX(1.0227);line-height:13.8px;">क्र.सं.</div>
<div class="t hd hh" style="left:37.50px;top:361.90px;line-height:13.8px;">नाम/पंजीकरण संख्या</div>
<div class="t hd hh" style="left:138.30px;top:361.90px;transform:scaleX(1.0333);line-height:13.8px;">जाति</div>
<div class="t hd hh" style="left:179.30px;top:361.90px;transform:scaleX(1.0125);line-height:13.8px;">गांव</div>
<div class="t hd" style="left:209.70px;top:363.10px;transform:scaleX(0.9700);line-height:12.2px;">1</div>
<div class="t hd" style="left:223.80px;top:363.10px;transform:scaleX(0.9700);line-height:12.2px;">2</div>
<div class="t hd" style="left:240.80px;top:363.10px;transform:scaleX(0.9700);line-height:12.2px;">3</div>
<div class="t hd" style="left:258.00px;top:363.10px;transform:scaleX(0.9700);line-height:12.2px;">4</div>
<div class="t hd" style="left:274.60px;top:363.10px;transform:scaleX(0.9700);line-height:12.2px;">5</div>
<div class="t hd" style="left:289.80px;top:363.10px;transform:scaleX(0.9700);line-height:12.2px;">6</div>
<div class="t hd" style="left:306.00px;top:363.10px;transform:scaleX(0.9700);line-height:12.2px;">7</div>
<div class="t hd hh" style="left:318.30px;top:355.20px;transform:scaleX(0.9621);line-height:13.4px;">कुल<br>हाजिरी</div>
<div class="t hd hh" style="left:352.00px;top:327.05px;transform:scaleX(0.9125);line-height:13.85px;">प्रतिदिन<br>मजदूर<br>(माप<br>के<br>अनुसार<br>)</div>
<div class="t hd hh" style="left:386.80px;top:355.20px;transform:scaleX(1.0211);line-height:13.4px;">देय<br>राशि</div>
<div class="t hd hh" style="left:410.00px;top:327.05px;line-height:13.85px;">यात्रा<br>और<br>खान<br>पान<br>का<br>व्यय</div>
<div class="t hd" style="left:435.14px;top:344.90px;transform:scaleX(0.9614);line-height:12.2px;">Implements<br>/<br>Sharpening<br>Charge</div>
<div class="t hd hh" style="left:497.50px;top:347.68px;transform:scaleX(0.9516);line-height:13.75px;">कुल<br>नकद<br>भुगतान</div>
<div class="t hd" style="left:531.53px;top:352.00px;transform:scaleX(0.9660);line-height:12.2px;">Postoffice/<br>Bank<br>Name</div>
<div class="t hd" style="left:588.54px;top:345.50px;transform:scaleX(0.9600);line-height:12.2px;">Postoffice<br>Code/<br>Branch<br>name</div>
<div class="t hd" style="left:649.06px;top:352.00px;transform:scaleX(0.9355);line-height:12.2px;">Postoffice<br>address/<br>Branch code</div>
<div class="t hd" style="left:736.30px;top:363.90px;transform:scaleX(0.9419);line-height:12.2px;">Wagelist No.</div>
<div class="t hd" style="left:821.30px;top:363.90px;transform:scaleX(0.9344);line-height:12.2px;">Status</div>
<div class="t hd" style="left:868.50px;top:351.80px;transform:scaleX(0.9524);line-height:12.2px;">A/c<br>Credited<br>Date</div>
<div class="t hd hh" style="left:921.30px;top:349.10px;transform:scaleX(1.0054);line-height:13.4px;">हस्ताक्षर/<br>अगुठे का<br>निशान</div>
<div class="t hd" style="left:963.80px;top:357.60px;transform:scaleX(0.9421);line-height:12.2px;">Attendance<br>By</div>
<div class="t bd " style="left:6.00px;top:429.70px;line-height:12.1px;">1</div>
<div class="t bd " style="left:34.30px;top:415.30px;transform:scaleX(0.9868);line-height:14px;">खागोमानोराम(Self)</div>
<div class="t bd " style="left:34.20px;top:430.15px;transform:scaleX(0.9566);line-height:12.1px;"><a>CH-16-011-036-</a></div>
<div class="t bd " style="left:34.20px;top:442.65px;transform:scaleX(1.0395);line-height:12.1px;"><a>002/114</a></div>
<div class="t bd " style="left:131.58px;top:429.70px;transform:scaleX(1.0154);line-height:12.1px;">SC</div>
<div class="t bd " style="left:170.30px;top:429.70px;line-height:12.1px;">Dabnai</div>
<div class="t bd" style="left:208.60px;top:429.70px;transform:scaleX(0.9700);line-height:12.1px;">A</div>
<div class="t bd" style="left:220.46px;top:429.70px;transform:scaleX(0.9400);line-height:12.1px;">P</div>
<div class="t bd" style="left:237.96px;top:429.70px;transform:scaleX(0.9400);line-height:12.1px;">P</div>
<div class="t bd" style="left:255.06px;top:429.70px;transform:scaleX(0.9400);line-height:12.1px;">P</div>
<div class="t bd" style="left:272.50px;top:429.70px;transform:scaleX(0.9700);line-height:12.1px;">A</div>
<div class="t bd" style="left:285.66px;top:429.70px;transform:scaleX(0.9400);line-height:12.1px;">P</div>
<div class="t bd" style="left:304.00px;top:429.70px;transform:scaleX(0.9700);line-height:12.1px;">A</div>
<div class="t bd" style="left:329.60px;top:429.70px;transform:scaleX(0.9800);line-height:12.1px;">4</div>
<div class="t bd " style="left:364.58px;top:429.70px;transform:scaleX(1.0250);line-height:12.1px;">200</div>
<div class="t bd " style="left:388.60px;top:429.70px;transform:scaleX(0.9647);line-height:12.1px;">800</div>
<div class="t bd" style="left:424.80px;top:429.70px;transform:scaleX(0.9800);line-height:12.1px;">0</div>
<div class="t bd" style="left:485.80px;top:429.70px;transform:scaleX(0.9800);line-height:12.1px;">0</div>
<div class="t bd " style="left:510.20px;top:429.70px;transform:scaleX(0.9706);line-height:12.1px;">800</div>
<div class="t bd c" style="left:536.06px;top:417.60px;transform:scaleX(0.9400);line-height:12.1px;">UNION<br>BANK OF<br>INDIA</div>
<div class="t bd " style="left:595.57px;top:429.70px;transform:scaleX(0.9306);line-height:12.1px;">URMAL</div>
<div class="t bd " style="left:645.82px;top:429.70px;transform:scaleX(0.9800);line-height:12.1px;">UBIN0548367</div>
<div class="t bd " style="left:718.99px;top:429.70px;transform:scaleX(1.0144);line-height:12.1px;">3316011WL033679</div>
<div class="t bd " style="left:815.82px;top:429.70px;transform:scaleX(0.9795);line-height:12.1px;">Credited</div>
<div class="t bd " style="left:860.75px;top:429.70px;transform:scaleX(1.0481);line-height:12.1px;">16/06/2025</div>
<div class="t bd " style="left:962.85px;top:423.65px;transform:scaleX(0.9526);line-height:12.1px;">DIKSAN<br>NAIK</div>
<div class="t bd " style="left:6.00px;top:478.45px;line-height:12.1px;">2</div>
<div class="t bd " style="left:33.39px;top:459.55px;transform:scaleX(1.0054);line-height:12.1px;">Daymati</div>
<div class="t bd " style="left:33.40px;top:471.65px;line-height:12.1px;">Makhansingh(Wife)</div>
<div class="t bd " style="left:34.20px;top:483.75px;transform:scaleX(0.9566);line-height:12.1px;"><a>CH-16-011-036-</a></div>
<div class="t bd " style="left:34.20px;top:495.85px;transform:scaleX(1.0395);line-height:12.1px;"><a>002/123</a></div>
<div class="t bd " style="left:131.58px;top:478.45px;transform:scaleX(1.0154);line-height:12.1px;">SC</div>
<div class="t bd " style="left:170.30px;top:478.45px;line-height:12.1px;">Dabnai</div>
<div class="t bd" style="left:208.60px;top:478.45px;transform:scaleX(0.9700);line-height:12.1px;">A</div>
<div class="t bd" style="left:220.46px;top:478.45px;transform:scaleX(0.9400);line-height:12.1px;">P</div>
<div class="t bd" style="left:237.96px;top:478.45px;transform:scaleX(0.9400);line-height:12.1px;">P</div>
<div class="t bd" style="left:255.06px;top:478.45px;transform:scaleX(0.9400);line-height:12.1px;">P</div>
<div class="t bd" style="left:272.50px;top:478.45px;transform:scaleX(0.9700);line-height:12.1px;">A</div>
<div class="t bd" style="left:285.66px;top:478.45px;transform:scaleX(0.9400);line-height:12.1px;">P</div>
<div class="t bd" style="left:304.00px;top:478.45px;transform:scaleX(0.9700);line-height:12.1px;">A</div>
<div class="t bd" style="left:329.60px;top:478.45px;transform:scaleX(0.9800);line-height:12.1px;">4</div>
<div class="t bd " style="left:364.58px;top:478.45px;transform:scaleX(1.0250);line-height:12.1px;">200</div>
<div class="t bd " style="left:388.60px;top:478.45px;transform:scaleX(0.9647);line-height:12.1px;">800</div>
<div class="t bd" style="left:424.80px;top:478.45px;transform:scaleX(0.9800);line-height:12.1px;">0</div>
<div class="t bd" style="left:485.80px;top:478.45px;transform:scaleX(0.9800);line-height:12.1px;">0</div>
<div class="t bd " style="left:510.20px;top:478.45px;transform:scaleX(0.9706);line-height:12.1px;">800</div>
<div class="t bd c" style="left:536.06px;top:466.35px;transform:scaleX(0.9400);line-height:12.1px;">UNION<br>BANK OF<br>INDIA</div>
<div class="t bd " style="left:595.57px;top:478.45px;transform:scaleX(0.9306);line-height:12.1px;">URMAL</div>
<div class="t bd " style="left:645.82px;top:478.45px;transform:scaleX(0.9800);line-height:12.1px;">UBIN0548367</div>
<div class="t bd " style="left:718.99px;top:478.45px;transform:scaleX(1.0144);line-height:12.1px;">3316011WL033679</div>
<div class="t bd " style="left:815.82px;top:478.45px;transform:scaleX(0.9795);line-height:12.1px;">Credited</div>
<div class="t bd " style="left:860.75px;top:478.45px;transform:scaleX(1.0481);line-height:12.1px;">16/06/2025</div>
<div class="t bd " style="left:962.85px;top:472.40px;transform:scaleX(0.9526);line-height:12.1px;">DIKSAN<br>NAIK</div>
<div class="t bd " style="left:6.00px;top:527.20px;line-height:12.1px;">3</div>
<div class="t bd " style="left:34.30px;top:512.80px;transform:scaleX(0.9886);line-height:14px;">तमनाबाईभोनाथ(Wife)</div>
<div class="t bd " style="left:34.20px;top:527.65px;transform:scaleX(0.9566);line-height:12.1px;"><a>CH-16-011-036-</a></div>
<div class="t bd " style="left:34.20px;top:540.15px;transform:scaleX(1.0395);line-height:12.1px;"><a>002/126</a></div>
<div class="t bd " style="left:131.58px;top:527.20px;transform:scaleX(1.0154);line-height:12.1px;">SC</div>
<div class="t bd " style="left:170.30px;top:527.20px;line-height:12.1px;">Dabnai</div>
<div class="t bd" style="left:208.60px;top:527.20px;transform:scaleX(0.9700);line-height:12.1px;">A</div>
<div class="t bd" style="left:220.46px;top:527.20px;transform:scaleX(0.9400);line-height:12.1px;">P</div>
<div class="t bd" style="left:237.96px;top:527.20px;transform:scaleX(0.9400);line-height:12.1px;">P</div>
<div class="t bd" style="left:255.06px;top:527.20px;transform:scaleX(0.9400);line-height:12.1px;">P</div>
<div class="t bd" style="left:272.50px;top:527.20px;transform:scaleX(0.9700);line-height:12.1px;">A</div>
<div class="t bd" style="left:285.66px;top:527.20px;transform:scaleX(0.9400);line-height:12.1px;">P</div>
<div class="t bd" style="left:304.00px;top:527.20px;transform:scaleX(0.9700);line-height:12.1px;">A</div>
<div class="t bd" style="left:329.60px;top:527.20px;transform:scaleX(0.9800);line-height:12.1px;">4</div>
<div class="t bd " style="left:364.58px;top:527.20px;transform:scaleX(1.0250);line-height:12.1px;">200</div>
<div class="t bd " style="left:388.60px;top:527.20px;transform:scaleX(0.9647);line-height:12.1px;">800</div>
<div class="t bd" style="left:424.80px;top:527.20px;transform:scaleX(0.9800);line-height:12.1px;">0</div>
<div class="t bd" style="left:485.80px;top:527.20px;transform:scaleX(0.9800);line-height:12.1px;">0</div>
<div class="t bd " style="left:510.20px;top:527.20px;transform:scaleX(0.9706);line-height:12.1px;">800</div>
<div class="t bd c" style="left:536.06px;top:515.10px;transform:scaleX(0.9400);line-height:12.1px;">UNION<br>BANK OF<br>INDIA</div>
<div class="t bd " style="left:595.57px;top:527.20px;transform:scaleX(0.9306);line-height:12.1px;">URMAL</div>
<div class="t bd " style="left:645.82px;top:527.20px;transform:scaleX(0.9800);line-height:12.1px;">UBIN0548367</div>
<div class="t bd " style="left:718.99px;top:527.20px;transform:scaleX(1.0144);line-height:12.1px;">3316011WL033679</div>
<div class="t bd " style="left:815.82px;top:527.20px;transform:scaleX(0.9795);line-height:12.1px;">Credited</div>
<div class="t bd " style="left:860.75px;top:527.20px;transform:scaleX(1.0481);line-height:12.1px;">16/06/2025</div>
<div class="t bd " style="left:962.85px;top:521.15px;transform:scaleX(0.9526);line-height:12.1px;">DIKSAN<br>NAIK</div>
<div class="t bd " style="left:7.00px;top:570.70px;line-height:12.1px;">4</div>
<div class="t bd " style="left:33.31px;top:556.30px;transform:scaleX(0.9899);line-height:14px;">भाग्यवतीचंद्रभान(Wife)</div>
<div class="t bd " style="left:34.20px;top:571.15px;transform:scaleX(0.9566);line-height:12.1px;"><a>CH-16-011-036-</a></div>
<div class="t bd " style="left:34.20px;top:583.65px;transform:scaleX(1.0395);line-height:12.1px;"><a>002/127</a></div>
<div class="t bd " style="left:131.58px;top:570.70px;transform:scaleX(1.0154);line-height:12.1px;">SC</div>
<div class="t bd " style="left:170.30px;top:570.70px;line-height:12.1px;">Dabnai</div>
<div class="t bd" style="left:208.60px;top:570.70px;transform:scaleX(0.9700);line-height:12.1px;">A</div>
<div class="t bd" style="left:220.46px;top:570.70px;transform:scaleX(0.9400);line-height:12.1px;">P</div>
<div class="t bd" style="left:237.96px;top:570.70px;transform:scaleX(0.9400);line-height:12.1px;">P</div>
<div class="t bd" style="left:255.06px;top:570.70px;transform:scaleX(0.9400);line-height:12.1px;">P</div>
<div class="t bd" style="left:272.50px;top:570.70px;transform:scaleX(0.9700);line-height:12.1px;">A</div>
<div class="t bd" style="left:285.66px;top:570.70px;transform:scaleX(0.9400);line-height:12.1px;">P</div>
<div class="t bd" style="left:304.00px;top:570.70px;transform:scaleX(0.9700);line-height:12.1px;">A</div>
<div class="t bd" style="left:329.60px;top:570.70px;transform:scaleX(0.9800);line-height:12.1px;">4</div>
<div class="t bd " style="left:364.58px;top:570.70px;transform:scaleX(1.0250);line-height:12.1px;">200</div>
<div class="t bd " style="left:388.60px;top:570.70px;transform:scaleX(0.9647);line-height:12.1px;">800</div>
<div class="t bd" style="left:424.80px;top:570.70px;transform:scaleX(0.9800);line-height:12.1px;">0</div>
<div class="t bd" style="left:485.80px;top:570.70px;transform:scaleX(0.9800);line-height:12.1px;">0</div>
<div class="t bd " style="left:510.20px;top:570.70px;transform:scaleX(0.9706);line-height:12.1px;">800</div>
<div class="t bd c" style="left:536.06px;top:558.60px;transform:scaleX(0.9400);line-height:12.1px;">UNION<br>BANK OF<br>INDIA</div>
<div class="t bd " style="left:595.57px;top:570.70px;transform:scaleX(0.9306);line-height:12.1px;">URMAL</div>
<div class="t bd " style="left:645.82px;top:570.70px;transform:scaleX(0.9800);line-height:12.1px;">UBIN0548367</div>
<div class="t bd " style="left:718.99px;top:570.70px;transform:scaleX(1.0144);line-height:12.1px;">3316011WL033679</div>
<div class="t bd " style="left:815.82px;top:570.70px;transform:scaleX(0.9795);line-height:12.1px;">Credited</div>
<div class="t bd " style="left:860.75px;top:570.70px;transform:scaleX(1.0481);line-height:12.1px;">16/06/2025</div>
<div class="t bd " style="left:962.85px;top:564.65px;transform:scaleX(0.9526);line-height:12.1px;">DIKSAN<br>NAIK</div>
<div class="t bd " style="left:6.00px;top:614.20px;line-height:12.1px;">5</div>
<div class="t bd " style="left:34.30px;top:599.80px;transform:scaleX(0.9745);line-height:14px;">सराबनीनारनो</div>
<div class="t bd " style="left:34.20px;top:614.65px;transform:scaleX(0.9566);line-height:12.1px;"><a>CH-16-011-036-</a></div>
<div class="t bd " style="left:34.20px;top:627.15px;transform:scaleX(1.0375);line-height:12.1px;"><a>002/13</a></div>
<div class="t bd " style="left:131.58px;top:614.20px;transform:scaleX(1.0154);line-height:12.1px;">SC</div>
<div class="t bd " style="left:170.30px;top:614.20px;line-height:12.1px;">Dabnai</div>
<div class="t bd" style="left:208.60px;top:614.20px;transform:scaleX(0.9700);line-height:12.1px;">A</div>
<div class="t bd" style="left:220.46px;top:614.20px;transform:scaleX(0.9400);line-height:12.1px;">P</div>
<div class="t bd" style="left:237.96px;top:614.20px;transform:scaleX(0.9400);line-height:12.1px;">P</div>
<div class="t bd" style="left:255.06px;top:614.20px;transform:scaleX(0.9400);line-height:12.1px;">P</div>
<div class="t bd" style="left:272.50px;top:614.20px;transform:scaleX(0.9700);line-height:12.1px;">A</div>
<div class="t bd" style="left:285.66px;top:614.20px;transform:scaleX(0.9400);line-height:12.1px;">P</div>
<div class="t bd" style="left:304.00px;top:614.20px;transform:scaleX(0.9700);line-height:12.1px;">A</div>
<div class="t bd" style="left:329.60px;top:614.20px;transform:scaleX(0.9800);line-height:12.1px;">4</div>
<div class="t bd " style="left:364.58px;top:614.20px;transform:scaleX(1.0250);line-height:12.1px;">200</div>
<div class="t bd " style="left:388.60px;top:614.20px;transform:scaleX(0.9647);line-height:12.1px;">800</div>
<div class="t bd" style="left:424.80px;top:614.20px;transform:scaleX(0.9800);line-height:12.1px;">0</div>
<div class="t bd" style="left:485.80px;top:614.20px;transform:scaleX(0.9800);line-height:12.1px;">0</div>
<div class="t bd " style="left:510.20px;top:614.20px;transform:scaleX(0.9706);line-height:12.1px;">800</div>
<div class="t bd c" style="left:536.06px;top:602.10px;transform:scaleX(0.9400);line-height:12.1px;">UNION<br>BANK OF<br>INDIA</div>
<div class="t bd " style="left:595.57px;top:614.20px;transform:scaleX(0.9306);line-height:12.1px;">URMAL</div>
<div class="t bd " style="left:645.82px;top:614.20px;transform:scaleX(0.9800);line-height:12.1px;">UBIN0548367</div>
<div class="t bd " style="left:718.99px;top:614.20px;transform:scaleX(1.0144);line-height:12.1px;">3316011WL033679</div>
<div class="t bd " style="left:815.82px;top:614.20px;transform:scaleX(0.9795);line-height:12.1px;">Credited</div>
<div class="t bd " style="left:860.75px;top:614.20px;transform:scaleX(1.0481);line-height:12.1px;">16/06/2025</div>
<div class="t bd " style="left:962.85px;top:608.15px;transform:scaleX(0.9526);line-height:12.1px;">DIKSAN<br>NAIK</div>
<div class="t bd " style="left:6.00px;top:657.70px;line-height:12.1px;">6</div>
<div class="t bd " style="left:34.30px;top:643.30px;transform:scaleX(1.0042);line-height:14px;">दिव्या(Wife)</div>
<div class="t bd " style="left:34.20px;top:658.15px;transform:scaleX(0.9566);line-height:12.1px;"><a>CH-16-011-036-</a></div>
<div class="t bd " style="left:34.20px;top:670.65px;transform:scaleX(1.0395);line-height:12.1px;"><a>002/136</a></div>
<div class="t bd " style="left:131.65px;top:657.70px;transform:scaleX(0.9543);line-height:12.1px;">OTHER</div>
<div class="t bd " style="left:170.30px;top:657.70px;line-height:12.1px;">Dabnai</div>
<div class="t bd" style="left:208.60px;top:657.70px;transform:scaleX(0.9700);line-height:12.1px;">A</div>
<div class="t bd" style="left:220.46px;top:657.70px;transform:scaleX(0.9400);line-height:12.1px;">P</div>
<div class="t bd" style="left:237.96px;top:657.70px;transform:scaleX(0.9400);line-height:12.1px;">P</div>
<div class="t bd" style="left:255.06px;top:657.70px;transform:scaleX(0.9400);line-height:12.1px;">P</div>
<div class="t bd" style="left:272.50px;top:657.70px;transform:scaleX(0.9700);line-height:12.1px;">A</div>
<div class="t bd" style="left:285.66px;top:657.70px;transform:scaleX(0.9400);line-height:12.1px;">P</div>
<div class="t bd" style="left:304.00px;top:657.70px;transform:scaleX(0.9700);line-height:12.1px;">A</div>
<div class="t bd" style="left:329.60px;top:657.70px;transform:scaleX(0.9800);line-height:12.1px;">4</div>
<div class="t bd " style="left:364.58px;top:657.70px;transform:scaleX(1.0250);line-height:12.1px;">200</div>
<div class="t bd " style="left:388.60px;top:657.70px;transform:scaleX(0.9647);line-height:12.1px;">800</div>
<div class="t bd" style="left:424.80px;top:657.70px;transform:scaleX(0.9800);line-height:12.1px;">0</div>
<div class="t bd" style="left:485.80px;top:657.70px;transform:scaleX(0.9800);line-height:12.1px;">0</div>
<div class="t bd " style="left:510.20px;top:657.70px;transform:scaleX(0.9706);line-height:12.1px;">800</div>
<div class="t bd c" style="left:536.06px;top:645.60px;transform:scaleX(0.9400);line-height:12.1px;">UNION<br>BANK OF<br>INDIA</div>
<div class="t bd " style="left:595.57px;top:657.70px;transform:scaleX(0.9306);line-height:12.1px;">URMAL</div>
<div class="t bd " style="left:645.82px;top:657.70px;transform:scaleX(0.9800);line-height:12.1px;">UBIN0548367</div>
<div class="t bd " style="left:718.99px;top:657.70px;transform:scaleX(1.0144);line-height:12.1px;">3316011WL033679</div>
<div class="t bd " style="left:815.82px;top:657.70px;transform:scaleX(0.9795);line-height:12.1px;">Credited</div>
<div class="t bd " style="left:860.75px;top:657.70px;transform:scaleX(1.0481);line-height:12.1px;">16/06/2025</div>
<div class="t bd " style="left:962.85px;top:651.65px;transform:scaleX(0.9526);line-height:12.1px;">DIKSAN<br>NAIK</div>
<div class="t bd " style="left:6.00px;top:701.20px;line-height:12.1px;">7</div>
<div class="t bd " style="left:34.30px;top:686.80px;transform:scaleX(1.0119);line-height:14px;">चम्पा / डमरूधर</div>
<div class="t bd " style="left:34.20px;top:701.65px;transform:scaleX(0.9566);line-height:12.1px;"><a>CH-16-011-036-</a></div>
<div class="t bd " style="left:34.20px;top:714.15px;transform:scaleX(1.0395);line-height:12.1px;"><a>002/130</a></div>
<div class="t bd " style="left:131.58px;top:701.20px;transform:scaleX(1.0154);line-height:12.1px;">SC</div>
<div class="t bd " style="left:170.30px;top:701.20px;line-height:12.1px;">Dabnai</div>
<div class="t bd" style="left:208.60px;top:701.20px;transform:scaleX(0.9700);line-height:12.1px;">A</div>
<div class="t bd" style="left:220.46px;top:701.20px;transform:scaleX(0.9400);line-height:12.1px;">P</div>
<div class="t bd" style="left:237.96px;top:701.20px;transform:scaleX(0.9400);line-height:12.1px;">P</div>
<div class="t bd" style="left:255.06px;top:701.20px;transform:scaleX(0.9400);line-height:12.1px;">P</div>
<div class="t bd" style="left:272.50px;top:701.20px;transform:scaleX(0.9700);line-height:12.1px;">A</div>
<div class="t bd" style="left:285.66px;top:701.20px;transform:scaleX(0.9400);line-height:12.1px;">P</div>
<div class="t bd" style="left:304.00px;top:701.20px;transform:scaleX(0.9700);line-height:12.1px;">A</div>
<div class="t bd" style="left:329.60px;top:701.20px;transform:scaleX(0.9800);line-height:12.1px;">4</div>
<div class="t bd " style="left:364.58px;top:701.20px;transform:scaleX(1.0250);line-height:12.1px;">200</div>
<div class="t bd " style="left:388.60px;top:701.20px;transform:scaleX(0.9647);line-height:12.1px;">800</div>
<div class="t bd" style="left:424.80px;top:701.20px;transform:scaleX(0.9800);line-height:12.1px;">0</div>
<div class="t bd" style="left:485.80px;top:701.20px;transform:scaleX(0.9800);line-height:12.1px;">0</div>
<div class="t bd " style="left:510.20px;top:701.20px;transform:scaleX(0.9706);line-height:12.1px;">800</div>
<div class="t bd c" style="left:536.06px;top:695.15px;transform:scaleX(0.9400);line-height:12.1px;">BANK OF<br>BARODA</div>
<div class="t bd " style="left:589.31px;top:701.20px;transform:scaleX(0.8868);line-height:12.1px;">DEOBHOG</div>
<div class="t bd " style="left:642.69px;top:701.20px;transform:scaleX(0.9128);line-height:12.1px;">BARB0DBDEOB</div>
<div class="t bd " style="left:718.99px;top:701.20px;transform:scaleX(1.0144);line-height:12.1px;">3316011WL033679</div>
<div class="t bd " style="left:815.82px;top:701.20px;transform:scaleX(0.9795);line-height:12.1px;">Credited</div>
<div class="t bd " style="left:860.75px;top:701.20px;transform:scaleX(1.0481);line-height:12.1px;">16/06/2025</div>
<div class="t bd " style="left:962.85px;top:695.15px;transform:scaleX(0.9526);line-height:12.1px;">DIKSAN<br>NAIK</div>
<div class="t bd " style="left:7.00px;top:744.70px;line-height:12.1px;">8</div>
<div class="t bd " style="left:34.30px;top:730.30px;line-height:14px;">यशवंतजुगलाल(Self)</div>
<div class="t bd " style="left:34.20px;top:745.15px;transform:scaleX(0.9566);line-height:12.1px;"><a>CH-16-011-036-</a></div>
<div class="t bd " style="left:34.20px;top:757.65px;transform:scaleX(1.0395);line-height:12.1px;"><a>002/118</a></div>
<div class="t bd " style="left:131.58px;top:744.70px;transform:scaleX(1.0154);line-height:12.1px;">SC</div>
<div class="t bd " style="left:170.30px;top:744.70px;line-height:12.1px;">Dabnai</div>
<div class="t bd" style="left:208.60px;top:744.70px;transform:scaleX(0.9700);line-height:12.1px;">A</div>
<div class="t bd" style="left:220.46px;top:744.70px;transform:scaleX(0.9400);line-height:12.1px;">P</div>
<div class="t bd" style="left:237.96px;top:744.70px;transform:scaleX(0.9400);line-height:12.1px;">P</div>
<div class="t bd" style="left:255.06px;top:744.70px;transform:scaleX(0.9400);line-height:12.1px;">P</div>
<div class="t bd" style="left:272.50px;top:744.70px;transform:scaleX(0.9700);line-height:12.1px;">A</div>
<div class="t bd" style="left:285.66px;top:744.70px;transform:scaleX(0.9400);line-height:12.1px;">P</div>
<div class="t bd" style="left:304.00px;top:744.70px;transform:scaleX(0.9700);line-height:12.1px;">A</div>
<div class="t bd" style="left:329.60px;top:744.70px;transform:scaleX(0.9800);line-height:12.1px;">4</div>
<div class="t bd " style="left:364.58px;top:744.70px;transform:scaleX(1.0250);line-height:12.1px;">200</div>
<div class="t bd " style="left:388.60px;top:744.70px;transform:scaleX(0.9647);line-height:12.1px;">800</div>
<div class="t bd" style="left:424.80px;top:744.70px;transform:scaleX(0.9800);line-height:12.1px;">0</div>
<div class="t bd" style="left:485.80px;top:744.70px;transform:scaleX(0.9800);line-height:12.1px;">0</div>
<div class="t bd " style="left:510.20px;top:744.70px;transform:scaleX(0.9706);line-height:12.1px;">800</div>
<div class="t bd c" style="left:536.06px;top:738.65px;transform:scaleX(0.9400);line-height:12.1px;">BANK OF<br>BARODA</div>
<div class="t bd " style="left:589.31px;top:744.70px;transform:scaleX(0.8868);line-height:12.1px;">DEOBHOG</div>
<div class="t bd " style="left:642.69px;top:744.70px;transform:scaleX(0.9128);line-height:12.1px;">BARB0DBDEOB</div>
<div class="t bd " style="left:718.99px;top:744.70px;transform:scaleX(1.0144);line-height:12.1px;">3316011WL033679</div>
<div class="t bd " style="left:815.82px;top:744.70px;transform:scaleX(0.9795);line-height:12.1px;">Credited</div>
<div class="t bd " style="left:860.75px;top:744.70px;transform:scaleX(1.0481);line-height:12.1px;">16/06/2025</div>
<div class="t bd " style="left:962.85px;top:738.65px;transform:scaleX(0.9526);line-height:12.1px;">DIKSAN<br>NAIK</div>
<div class="t bd " style="left:6.00px;top:788.25px;line-height:12.1px;">9</div>
<div class="t bd " style="left:34.30px;top:773.80px;transform:scaleX(0.9915);line-height:14px;">तोषन्तीबाईयशंवत(Wife)</div>
<div class="t bd " style="left:34.20px;top:788.65px;transform:scaleX(0.9566);line-height:12.1px;"><a>CH-16-011-036-</a></div>
<div class="t bd " style="left:34.20px;top:801.15px;transform:scaleX(1.0395);line-height:12.1px;"><a>002/118</a></div>
<div class="t bd " style="left:131.58px;top:788.25px;transform:scaleX(1.0154);line-height:12.1px;">SC</div>
<div class="t bd " style="left:170.30px;top:788.25px;line-height:12.1px;">Dabnai</div>
<div class="t bd" style="left:208.60px;top:788.25px;transform:scaleX(0.9700);line-height:12.1px;">A</div>
<div class="t bd" style="left:220.46px;top:788.25px;transform:scaleX(0.9400);line-height:12.1px;">P</div>
<div class="t bd" style="left:237.96px;top:788.25px;transform:scaleX(0.9400);line-height:12.1px;">P</div>
<div class="t bd" style="left:255.06px;top:788.25px;transform:scaleX(0.9400);line-height:12.1px;">P</div>
<div class="t bd" style="left:272.50px;top:788.25px;transform:scaleX(0.9700);line-height:12.1px;">A</div>
<div class="t bd" style="left:285.66px;top:788.25px;transform:scaleX(0.9400);line-height:12.1px;">P</div>
<div class="t bd" style="left:304.00px;top:788.25px;transform:scaleX(0.9700);line-height:12.1px;">A</div>
<div class="t bd" style="left:329.60px;top:788.25px;transform:scaleX(0.9800);line-height:12.1px;">4</div>
<div class="t bd " style="left:364.58px;top:788.25px;transform:scaleX(1.0250);line-height:12.1px;">200</div>
<div class="t bd " style="left:388.60px;top:788.25px;transform:scaleX(0.9647);line-height:12.1px;">800</div>
<div class="t bd" style="left:424.80px;top:788.25px;transform:scaleX(0.9800);line-height:12.1px;">0</div>
<div class="t bd" style="left:485.80px;top:788.25px;transform:scaleX(0.9800);line-height:12.1px;">0</div>
<div class="t bd " style="left:510.20px;top:788.25px;transform:scaleX(0.9706);line-height:12.1px;">800</div>
<div class="t bd c" style="left:536.06px;top:782.20px;transform:scaleX(0.9400);line-height:12.1px;">BANK OF<br>BARODA</div>
<div class="t bd " style="left:589.31px;top:788.25px;transform:scaleX(0.8868);line-height:12.1px;">DEOBHOG</div>
<div class="t bd " style="left:642.69px;top:788.25px;transform:scaleX(0.9128);line-height:12.1px;">BARB0DBDEOB</div>
<div class="t bd " style="left:718.99px;top:788.25px;transform:scaleX(1.0144);line-height:12.1px;">3316011WL033679</div>
<div class="t bd " style="left:815.82px;top:788.25px;transform:scaleX(0.9795);line-height:12.1px;">Credited</div>
<div class="t bd " style="left:860.75px;top:788.25px;transform:scaleX(1.0481);line-height:12.1px;">16/06/2025</div>
<div class="t bd " style="left:962.85px;top:782.20px;transform:scaleX(0.9526);line-height:12.1px;">DIKSAN<br>NAIK</div>
<div class="t bd " style="left:6.00px;top:831.75px;line-height:12.1px;">10</div>
<div class="t bd " style="left:34.30px;top:817.40px;transform:scaleX(0.9860);line-height:14px;">गुनोबाईनंदकिशोर(Wife)</div>
<div class="t bd " style="left:34.20px;top:832.25px;transform:scaleX(0.9566);line-height:12.1px;"><a>CH-16-011-036-</a></div>
<div class="t bd " style="left:34.20px;top:844.75px;transform:scaleX(1.0395);line-height:12.1px;"><a>002/121</a></div>
<div class="t bd " style="left:131.58px;top:831.75px;transform:scaleX(1.0154);line-height:12.1px;">SC</div>
<div class="t bd " style="left:170.30px;top:831.75px;line-height:12.1px;">Dabnai</div>
<div class="t bd" style="left:208.60px;top:831.75px;transform:scaleX(0.9700);line-height:12.1px;">A</div>
<div class="t bd" style="left:220.46px;top:831.75px;transform:scaleX(0.9400);line-height:12.1px;">P</div>
<div class="t bd" style="left:237.96px;top:831.75px;transform:scaleX(0.9400);line-height:12.1px;">P</div>
<div class="t bd" style="left:255.06px;top:831.75px;transform:scaleX(0.9400);line-height:12.1px;">P</div>
<div class="t bd" style="left:272.50px;top:831.75px;transform:scaleX(0.9700);line-height:12.1px;">A</div>
<div class="t bd" style="left:285.66px;top:831.75px;transform:scaleX(0.9400);line-height:12.1px;">P</div>
<div class="t bd" style="left:304.00px;top:831.75px;transform:scaleX(0.9700);line-height:12.1px;">A</div>
<div class="t bd" style="left:329.60px;top:831.75px;transform:scaleX(0.9800);line-height:12.1px;">4</div>
<div class="t bd " style="left:364.58px;top:831.75px;transform:scaleX(1.0250);line-height:12.1px;">200</div>
<div class="t bd " style="left:388.60px;top:831.75px;transform:scaleX(0.9647);line-height:12.1px;">800</div>
<div class="t bd" style="left:424.80px;top:831.75px;transform:scaleX(0.9800);line-height:12.1px;">0</div>
<div class="t bd" style="left:485.80px;top:831.75px;transform:scaleX(0.9800);line-height:12.1px;">0</div>
<div class="t bd " style="left:510.20px;top:831.75px;transform:scaleX(0.9706);line-height:12.1px;">800</div>
<div class="t bd c" style="left:536.06px;top:825.70px;transform:scaleX(0.9400);line-height:12.1px;">BANK OF<br>BARODA</div>
<div class="t bd " style="left:589.31px;top:831.75px;transform:scaleX(0.8868);line-height:12.1px;">DEOBHOG</div>
<div class="t bd " style="left:642.69px;top:831.75px;transform:scaleX(0.9128);line-height:12.1px;">BARB0DBDEOB</div>
<div class="t bd " style="left:718.99px;top:831.75px;transform:scaleX(1.0144);line-height:12.1px;">3316011WL033679</div>
<div class="t bd " style="left:815.82px;top:831.75px;transform:scaleX(0.9795);line-height:12.1px;">Credited</div>
<div class="t bd " style="left:860.75px;top:831.75px;transform:scaleX(1.0481);line-height:12.1px;">16/06/2025</div>
<div class="t bd " style="left:962.85px;top:825.70px;transform:scaleX(0.9526);line-height:12.1px;">DIKSAN<br>NAIK</div>
<div class="t b" style="left:156.30px;top:862.20px;transform:scaleX(0.9875);line-height:14px;color:#f4f6fa;font-size:10.6px;">कुल हाजिरी</div>
<div class="t b" style="left:208.80px;top:862.50px;transform:scaleX(0.9500);line-height:14px;color:#f4f6fa;font-size:10.6px;">0</div>
<div class="t b" style="left:221.09px;top:862.50px;transform:scaleX(0.9091);line-height:14px;color:#f4f6fa;font-size:10.6px;">10</div>
<div class="t b" style="left:238.59px;top:862.50px;transform:scaleX(0.9091);line-height:14px;color:#f4f6fa;font-size:10.6px;">10</div>
<div class="t b" style="left:255.39px;top:862.50px;transform:scaleX(0.9091);line-height:14px;color:#f4f6fa;font-size:10.6px;">10</div>
<div class="t b" style="left:273.00px;top:862.50px;transform:scaleX(0.9500);line-height:14px;color:#f4f6fa;font-size:10.6px;">0</div>
<div class="t b" style="left:286.09px;top:862.50px;transform:scaleX(0.9091);line-height:14px;color:#f4f6fa;font-size:10.6px;">10</div>
<div class="t b" style="left:304.30px;top:862.50px;transform:scaleX(0.9500);line-height:14px;color:#f4f6fa;font-size:10.6px;">0</div>
<div class="t s105" style="left:29.60px;top:896.20px;transform:scaleX(0.9730);line-height:14px;color:#333;">वर्ग प्रदाय राशि(In Rs.)</div>
<div class="t s105" style="left:28.60px;top:915.80px;line-height:14px;color:#333;">प्रदाय राशि अनुसूचित जाति</div>
<div class="t s105" style="left:28.60px;top:935.00px;line-height:14px;color:#333;">प्रदाय राशि अनुसूचित जनजाति</div>
<div class="t s105" style="left:28.59px;top:954.50px;transform:scaleX(1.0068);line-height:14px;color:#333;">प्रदाय राशि अन्य</div>
<div class="t s105" style="left:192.56px;top:917.10px;transform:scaleX(1.0409);line-height:14px;color:#333;">7200</div>
<div class="t s105" style="left:201.80px;top:936.40px;transform:scaleX(1.0200);line-height:14px;color:#333;">0</div>
<div class="t s105" style="left:195.90px;top:956.00px;transform:scaleX(1.0118);line-height:14px;color:#333;">800</div>
<div class="t s105" style="left:529.50px;top:907.40px;transform:scaleX(0.9716);line-height:14px;color:#333;">कुल नकद भुगतान(In Rs.)</div>
<div class="t s105" style="left:528.53px;top:926.20px;transform:scaleX(0.9739);line-height:14px;color:#333;">Cash</div>
<div class="t s105" style="left:528.51px;top:943.80px;transform:scaleX(0.9896);line-height:14px;color:#333;">प्रति मजदुर औसत</div>
<div class="t s105" style="left:713.90px;top:926.20px;transform:scaleX(0.9957);line-height:14px;color:#333;">8000</div>
<div class="t s105" style="left:717.00px;top:944.50px;line-height:14px;color:#333;">800</div>
<div class="t s105" style="left:336.00px;top:912.00px;transform:scaleX(0.9847);line-height:14px;color:#333;">उपस्थिति कर्ता के हस्ताक्षर</div>
<div class="t s105" style="left:344.00px;top:961.70px;line-height:14px;color:#333;">जाँच कर्ता के हस्ताक्षर</div>
<div class="t s105" style="left:856.00px;top:926.50px;transform:scaleX(0.9759);line-height:14px;color:#333;">कुल मानव दिवस : 40</div>
</div>
</body></html>
